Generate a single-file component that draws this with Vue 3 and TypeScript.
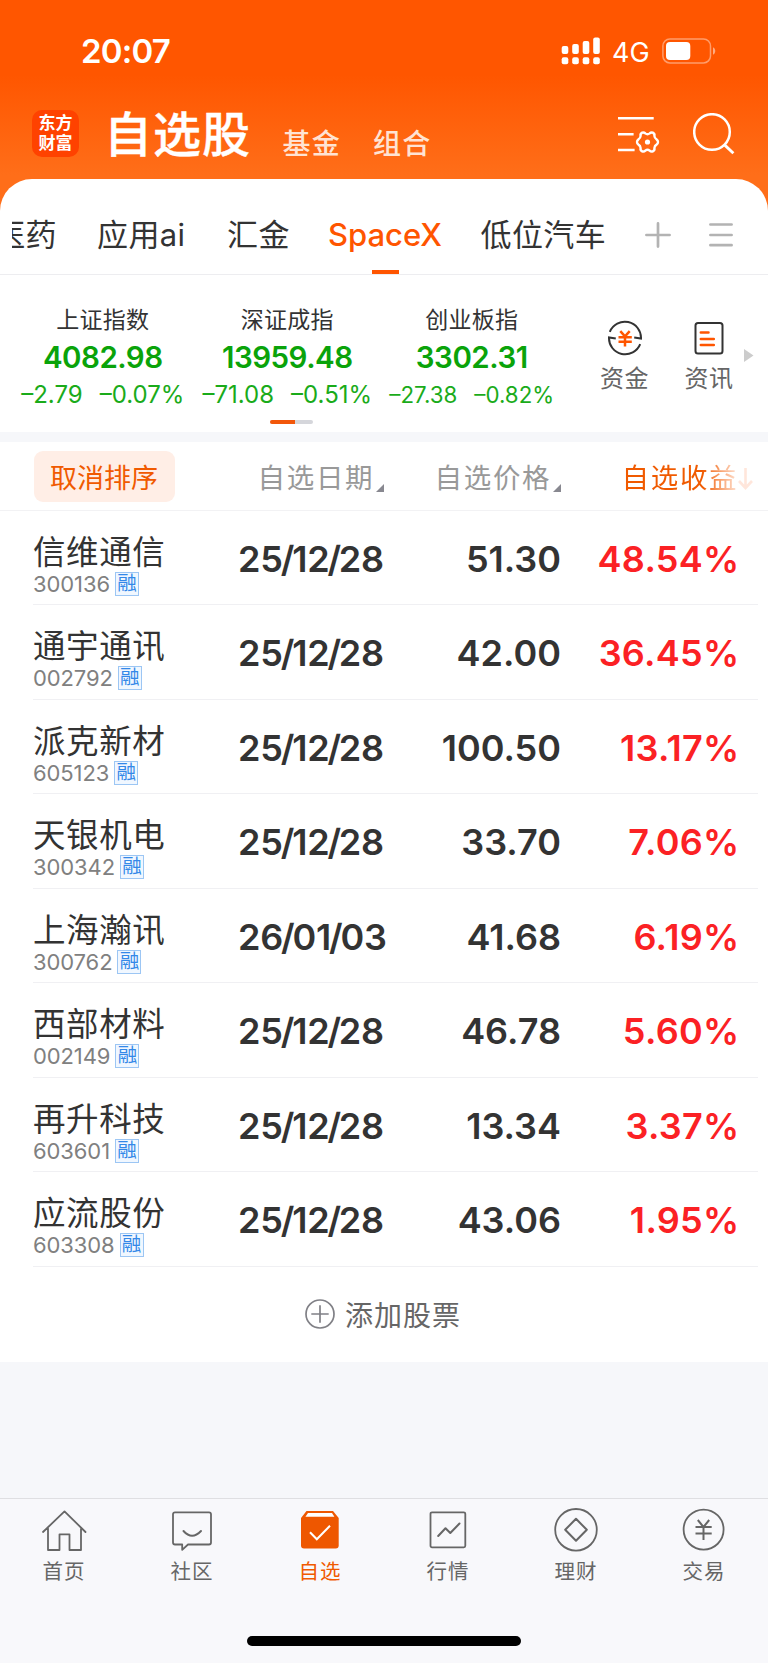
<script setup lang="ts">
interface IndexQuote {
  name: string
  value: string
  change: string
  percent: string
  size: 'wide' | 'narrow'
}

interface Stock {
  name: string
  code: string
  date: string
  price: string
  gain: string
}

interface NavItem {
  key: string
  label: string
}

const indices: IndexQuote[] = [
  { name: '上证指数', value: '4082.98', change: '–2.79', percent: '–0.07%', size: 'wide' },
  { name: '深证成指', value: '13959.48', change: '–71.08', percent: '–0.51%', size: 'wide' },
  { name: '创业板指', value: '3302.31', change: '–27.38', percent: '–0.82%', size: 'narrow' },
]

const stocks: Stock[] = [
  { name: '信维通信', code: '300136', date: '25/12/28', price: '51.30', gain: '48.54%' },
  { name: '通宇通讯', code: '002792', date: '25/12/28', price: '42.00', gain: '36.45%' },
  { name: '派克新材', code: '605123', date: '25/12/28', price: '100.50', gain: '13.17%' },
  { name: '天银机电', code: '300342', date: '25/12/28', price: '33.70', gain: '7.06%' },
  { name: '上海瀚讯', code: '300762', date: '26/01/03', price: '41.68', gain: '6.19%' },
  { name: '西部材料', code: '002149', date: '25/12/28', price: '46.78', gain: '5.60%' },
  { name: '再升科技', code: '603601', date: '25/12/28', price: '13.34', gain: '3.37%' },
  { name: '应流股份', code: '603308', date: '25/12/28', price: '43.06', gain: '1.95%' },
]

const navItems: NavItem[] = [
  { key: 'home', label: '首页' },
  { key: 'community', label: '社区' },
  { key: 'watchlist', label: '自选' },
  { key: 'market', label: '行情' },
  { key: 'wealth', label: '理财' },
  { key: 'trade', label: '交易' },
]

// Splits "25/12/28" into digits and slashes so the slashes can be set tighter.
const dateParts = (date: string): string[] => date.split(/(\/)/)
</script>

<template>
  <div class="screen">
    <header class="top">
      <div class="status">
        <span class="clock">20:07</span>
        <div class="status-right">
          <svg class="signal" width="40" height="28" viewBox="0 0 40 28" fill="#fff">
            <rect x="0.7" y="9" width="6.6" height="8" rx="2" />
            <rect x="11.2" y="7" width="6.6" height="10" rx="2" />
            <rect x="21.7" y="4" width="6.6" height="13" rx="2" />
            <rect x="32.2" y="0.5" width="6.6" height="16.5" rx="2" />
            <rect x="0.7" y="20.2" width="6.6" height="7" rx="2" />
            <rect x="11.2" y="20.2" width="6.6" height="7" rx="2" />
            <rect x="21.7" y="20.2" width="6.6" height="7" rx="2" />
            <rect x="32.2" y="20.2" width="6.6" height="7" rx="2" />
          </svg>
          <span class="network">4G</span>
          <svg class="battery" width="54" height="26" viewBox="0 0 54 26">
            <rect x="0.9" y="0.9" width="47.6" height="24" rx="7" fill="none" stroke="#fff" stroke-opacity="0.42" stroke-width="1.5" />
            <rect x="4" y="4" width="24.3" height="18" rx="4" fill="#fff" />
            <path d="M51 9.2c3 1.5 3 6 0 7.5z" fill="#fff" fill-opacity="0.5" />
          </svg>
        </div>
      </div>
      <div class="title-bar">
        <div class="logo"><span>东方</span><span>财富</span></div>
        <h1>自选股</h1>
        <span class="switch fund">基金</span>
        <span class="switch combo">组合</span>
        <svg class="manage" width="42" height="40" viewBox="0 0 42 40" fill="none" stroke="#fff" stroke-width="2.6">
          <path d="M0 4.2H35.7M0 20.2H15.6M0 36H16.6" />
          <path stroke-width="2.4" stroke-linejoin="round" d="M24.2 18.6Q26 18 27.3 19.4Q29.5 21 31.7 19.4Q33 18 34.8 18.6Q37 19.8 36.4 22Q36.6 24.2 38.6 25.4Q40 26.4 40 28Q40 29.6 38.6 30.6Q36.6 31.8 36.4 34Q37 36.2 34.8 37.4Q33 38 31.7 36.6Q29.5 35 27.3 36.6Q26 38 24.2 37.4Q22 36.2 22.6 34Q22.4 31.8 20.4 30.6Q19 29.6 19 28Q19 26.4 20.4 25.4Q22.4 24.2 22.6 22Q22 19.8 24.2 18.6Z" />
          <circle cx="29.5" cy="28" r="2.6" fill="#fff" stroke="none" />
        </svg>
        <svg class="search" width="42" height="42" viewBox="0 0 42 42" fill="none" stroke="#fff" stroke-width="2.5">
          <circle cx="19" cy="19" r="17.8" />
          <path d="M31 31.4 40.4 40.2" stroke-width="2.9" />
        </svg>
      </div>
    </header>

    <main class="card">
      <nav class="groups">
        <div class="clip"><span class="group">医药</span></div>
        <span class="group g-ai">应用ai</span>
        <span class="group g-hj">汇金</span>
        <span class="group g-sx">SpaceX</span>
        <span class="group g-car">低位汽车</span>
        <svg class="plus" width="26" height="26" viewBox="0 0 26 26" stroke="#b3b3b3" stroke-width="2.7" stroke-linecap="round">
          <path d="M1.4 13H24.6M13 1.4V24.6" />
        </svg>
        <svg class="menu" width="24" height="26" viewBox="0 0 24 26" stroke="#b3b3b3" stroke-width="2.7" stroke-linecap="round">
          <path d="M1.4 2.5H22.6M1.4 13H22.6M1.4 23.2H22.6" />
        </svg>
      </nav>

      <section class="market">
        <div v-for="q in indices" :key="q.name" class="index" :class="q.size">
          <div class="index-name">{{ q.name }}</div>
          <div class="index-value">{{ q.value }}</div>
          <div class="index-change"><span>{{ q.change }}</span><span>{{ q.percent }}</span></div>
        </div>
        <div class="shortcut">
          <svg width="36" height="36" viewBox="0 0 36 36" fill="none" stroke="#333" stroke-width="2">
            <path d="M2.8 11.8A16.2 16.2 0 0 1 34 18.6L27.2 17.5" />
            <path d="M33.2 24.2A16.2 16.2 0 0 1 2 17.4L8.8 18.5" />
            <path d="M13.3 11.2 18 16.4 22.7 11.2M11.5 17.2H24.8M11.5 21.7H24.8M18 16V26.5" stroke="#ff5500" stroke-width="2.5" />
          </svg>
          <span>资金</span>
        </div>
        <div class="shortcut news">
          <svg width="36" height="36" viewBox="0 0 36 36" fill="none" stroke="#333" stroke-width="2">
            <rect x="4.5" y="3" width="27" height="30.5" rx="2.5" />
            <path d="M9.8 12.5H17.5M9.8 19H22.8M9.8 25H22.8" stroke="#ff5500" stroke-width="2.5" stroke-linecap="round" />
          </svg>
          <span>资讯</span>
        </div>
        <svg class="more" width="10" height="13" viewBox="0 0 10 13"><path d="M0 0 9.5 6.5 0 13z" fill="#ccc" /></svg>
        <div class="pager"><i></i></div>
      </section>

      <div class="gap"></div>

      <section class="sort">
        <button class="cancel">取消排序</button>
        <div class="col c-date">自选日期<svg width="8" height="8" viewBox="0 0 8 8"><path d="M0 8 8 0V8z" fill="#888890" /></svg></div>
        <div class="col c-price">自选价格<svg width="8" height="8" viewBox="0 0 8 8"><path d="M0 8 8 0V8z" fill="#888890" /></svg></div>
        <div class="col c-gain">
          <span>自选收益</span>
          <svg width="15" height="22" viewBox="0 0 15 22" fill="none" stroke="#ffe6db" stroke-width="2.6"><path d="M7.5 0V20M1 13 7.5 20 14 13" /></svg>
        </div>
      </section>

      <section class="rows">
        <div v-for="s in stocks" :key="s.code" class="row">
          <div class="who">
            <div class="name">{{ s.name }}</div>
            <div class="code">{{ s.code }}<span class="badge">融</span></div>
          </div>
          <div class="date"><span v-for="(part, i) in dateParts(s.date)" :key="i" :class="{ slash: part === '/' }">{{ part }}</span></div>
          <div class="price">{{ s.price }}</div>
          <div class="gain">{{ s.gain }}</div>
        </div>
      </section>

      <div class="add">
        <svg width="30" height="30" viewBox="0 0 30 30" fill="none" stroke="#808086" stroke-width="1.7">
          <circle cx="15" cy="15" r="14" />
          <path d="M6.3 15H23.7M15 6.3V23.7" />
        </svg>
        <span>添加股票</span>
      </div>
    </main>

    <footer class="tabbar">
      <div class="tabs">
        <div v-for="n in navItems" :key="n.key" class="tab" :class="{ active: n.key === 'watchlist' }">
          <svg width="48" height="46" viewBox="0 0 48 46" fill="none" stroke="#666" stroke-width="1.8" stroke-linejoin="round" stroke-linecap="round">
            <template v-if="n.key === 'home'">
              <path d="M3 25 24.5 4.4 45.5 25M8 21.5V43H19.5V27.3H29.5V43H41V21.5" />
            </template>
            <template v-else-if="n.key === 'community'">
              <path d="M7 5.3H41Q43 5.3 43 7.3V35.5Q43 37.5 41 37.5H20L14.2 42.8V37.5H7Q5 37.5 5 35.5V7.3Q5 5.3 7 5.3Z" />
              <path d="M15.5 24Q24 33.5 33 24" stroke-width="2" />
            </template>
            <template v-else-if="n.key === 'watchlist'">
              <path d="M5 11 10.5 4H37L42.7 11V38.5Q42.7 41.5 39.7 41.5H8Q5 41.5 5 38.5Z" fill="#ee5700" stroke="none" />
              <path d="M9.4 9.8 12 6H36L38.4 9.8Z" fill="#fff" stroke="none" />
              <path d="M14 25.2 20.8 32.2 34 18.8" stroke="#fff" stroke-width="2" stroke-linecap="butt" stroke-linejoin="miter" />
            </template>
            <template v-else-if="n.key === 'market'">
              <rect x="6.5" y="5.3" width="34.8" height="35" rx="1.5" />
              <path d="M14.2 29 21.5 21.2 26.3 26 35.5 16.5" stroke-width="2" />
            </template>
            <template v-else-if="n.key === 'wealth'">
              <circle cx="24" cy="22.8" r="20.8" />
              <path d="M24 11.8 34.8 22.8 24 33.8 13.2 22.8Z" stroke-width="2" />
            </template>
            <template v-else>
              <circle cx="23.6" cy="22.6" r="20" />
              <path d="M17.8 13 23.5 20 29.2 13M15.5 20H31.7M15.5 26.5H31.7M23.5 20V33" stroke-width="2" stroke-linecap="butt" />
            </template>
          </svg>
          <span>{{ n.label }}</span>
        </div>
      </div>
      <div class="home-indicator"></div>
    </footer>
  </div>
</template>

<style>
body {
  margin: 0;
  background: #f6f7fa;
}
</style>

<style scoped>
.screen {
  width: 768px;
  height: 1663px;
  overflow: hidden;
  display: flex;
  flex-direction: column;
  box-sizing: border-box;
  font-family: Inter, "Noto Sans CJK SC", sans-serif;
  color: #333;
  background: linear-gradient(#ff5600 0, #ff5600 75px, #ff6e19 175px, #ff6e19 230px, #f6f7fa 230px);
  white-space: nowrap;
}
.top { height: 179px; flex: none; }
.status {
  height: 104px;
  display: flex;
  justify-content: space-between;
  padding: 0 52px 0 81px;
  color: #fff;
}
.clock { font-size: 33px; font-weight: 600; line-height: 40px; margin-top: 31px; letter-spacing: -0.8px; }
.status-right { display: flex; align-items: flex-start; }
.signal { margin-top: 37px; }
.network { font-size: 27px; line-height: 32px; margin: 37px 0 0 11px; width: 50px; }
.battery { margin-top: 38px; }
.title-bar { display: flex; align-items: flex-start; height: 75px; color: #fff; }
.logo {
  width: 47px;
  height: 47px;
  margin: 6px 0 0 32px;
  border-radius: 10px;
  background: #ff4200;
  display: flex;
  flex-direction: column;
  align-items: center;
  padding-top: 4px;
  box-sizing: border-box;
  font-size: 17px;
  line-height: 19.5px;
  font-weight: 700;
}
h1 { margin: -4px 0 0 25px; width: 178.5px; font-size: 48px; line-height: 70px; letter-spacing: 1px; font-weight: 500; -webkit-text-stroke: 0.4px #fff; }
.switch { font-size: 28px; line-height: 40px; letter-spacing: 1.2px; margin-top: 20px; color: #ffe3d3; font-weight: 500; width: 90.5px; }
.combo { width: 244.5px; }
.manage { margin-top: 10px; }
.search { margin: 9px 0 0 33px; }

.card { background: #fff; border-radius: 32px 32px 0 0; flex: none; }
.groups {
  height: 95px;
  border-bottom: 1px solid #ededf0;
  display: flex;
  align-items: flex-start;
  font-size: 31px;
}
.group { line-height: 44px; letter-spacing: 0.4px; }
.groups > * { margin-top: 34px; flex: none; }
.clip { width: 45px; margin-left: 12px; overflow: hidden; display: flex; justify-content: flex-end; }
.g-ai { width: 130px; margin-left: 40px; }
.g-hj { width: 101px; }
.groups .g-sx {
  width: 113px;
  color: #ff5500;
  font-weight: 500;
  font-size: 31px;
  letter-spacing: 0;
  height: 61px;
  background: linear-gradient(#ff5500, #ff5500) 43.5px 57px / 27px 4px no-repeat;
}
.g-car { margin-left: 39.5px; }
.groups .plus { margin: 43px 0 0 37px; }
.groups .menu { margin: 43px 0 0 38px; }
.groups .g-car { width: 127px; }

.market { display: flex; height: 157px; position: relative; align-items: flex-start; }
.index { width: 184.5px; text-align: center; flex: none; }
.index:first-child { margin-left: 10.5px; }
.index-name { margin-top: 28px; font-size: 23px; line-height: 34px; letter-spacing: 0.3px; }
.index-value { color: #0aa30a; font-weight: 600; font-size: 29.5px; line-height: 38px; margin-top: 1px; letter-spacing: -0.5px; }
.index-change { color: #1aab1a; font-size: 24px; line-height: 30px; margin-top: 4px; display: flex; justify-content: center; gap: 17px; }
.narrow .index-change { font-size: 22.3px; }
.shortcut { display: flex; flex-direction: column; align-items: center; width: 84px; color: #666; font-size: 24px; letter-spacing: 0.5px; margin-top: 45px; margin-left: 18.5px; }
.shortcut span { line-height: 36px; margin-top: 5px; }
.shortcut.news { margin-left: 0.5px; }
.more { margin-top: 74px; margin-left: -7.5px; flex: none; }
.pager { position: absolute; left: 270px; top: 145px; width: 43px; height: 4px; border-radius: 2px; background: #d5d6db; overflow: hidden; }
.pager i { display: block; width: 25px; height: 4px; background: #f2570a; }

.gap { height: 10px; background: #f6f7fa; }

.sort { height: 68px; border-bottom: 1px solid #f2f2f4; display: flex; align-items: flex-start; font-size: 27px; }
.cancel {
  width: 141px;
  height: 51px;
  margin: 9px 0 0 34px;
  padding: 0 1px 1px 0;
  border: 0;
  border-radius: 9px;
  background: #ffeee6;
  color: #f05a00;
  font: inherit;
  letter-spacing: 0;
}
.col { line-height: 40px; margin-top: 16px; color: #999; font-size: 27.5px; letter-spacing: 1.7px; display: flex; align-items: flex-end; }
.col svg { margin: 0 0 6px 2px; }
.c-date { margin-left: 82.5px; width: 177px; }
.c-price { width: 187px; }
.c-gain span { background: linear-gradient(90deg, #f05a00 80px, #ffe4d6 116px); -webkit-background-clip: text; background-clip: text; color: transparent; }
.c-gain svg { margin: 0 0 8px 0; }

.row { height: 94.44px; box-sizing: border-box; display: flex; margin: 0 10px 0 33px; border-bottom: 1px solid #f0f0f3; }
.who { width: 205px; flex: none; }
.name { font-size: 32.5px; line-height: 46px; letter-spacing: 0.6px; margin-top: 19px; }
.code { display: flex; align-items: center; font-size: 22px; line-height: 24px; height: 24px; color: #808080; letter-spacing: -0.1px; margin: -4px 0 0 0; }
.badge {
  width: 24px;
  height: 24px;
  margin-left: 5px;
  box-sizing: border-box;
  border: 1.5px solid #9cc6f4;
  background: #f0f7ff;
  color: #3388e8;
  font-size: 19.5px;
  line-height: 21px;
  text-align: center;
  letter-spacing: 0;
}
.date, .price, .gain { font-size: 36px; font-weight: 600; line-height: 48px; margin-top: 24px; flex: none; }
.date { width: 150px; display: flex; letter-spacing: -0.2px; }
.slash { margin: 0 -2px; }
.price { width: 173px; text-align: right; }
.gain { width: 178.5px; text-align: right; letter-spacing: 0.3px; color: #fb2124; }

.add { height: 95px; display: flex; align-items: center; padding-left: 305px; gap: 10px; font-size: 28px; letter-spacing: 1px; color: #666; }

.tabbar { margin-top: auto; height: 164px; border-top: 1px solid #dfdfe2; background: #f8f8fb; }
.tabs { display: flex; }
.tab { width: 128px; display: flex; flex-direction: column; align-items: center; padding-top: 8px; font-size: 20.5px; letter-spacing: 1px; color: #666; }
.tab span { line-height: 30px; margin-top: 4px; }
.tab.active { color: #f05a00; }
.home-indicator { width: 274px; height: 10px; border-radius: 5px; background: #000; margin: 49px 0 0 247px; }
</style>
